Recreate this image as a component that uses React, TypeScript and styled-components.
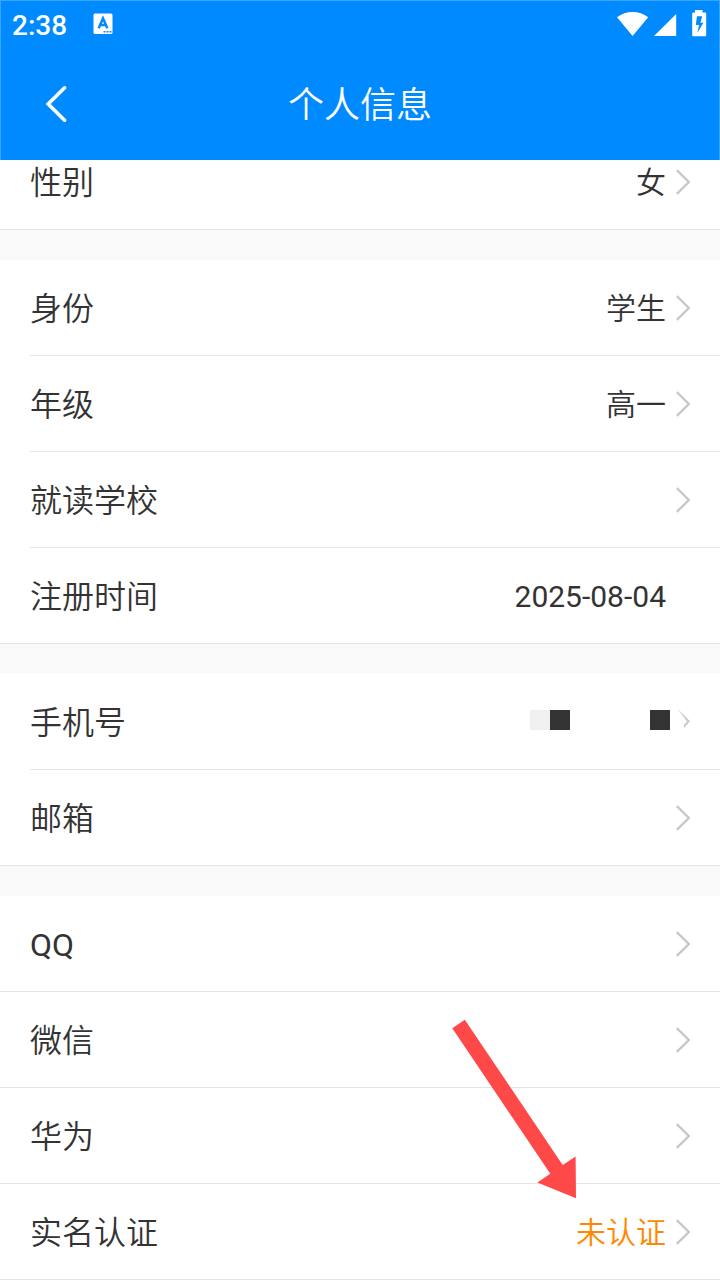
import React from "react";
import styled, { createGlobalStyle } from "styled-components";

const GlobalStyle = createGlobalStyle`
  * { box-sizing: border-box; }
  body {
    margin: 0;
    background: #fff;
    font-family: Roboto, "Noto Sans CJK SC", sans-serif;
    color: #333;
  }
`;

const Screen = styled.div`
  position: relative;
  display: flex;
  flex-direction: column;
  width: 720px;
  height: 1280px;
  overflow: hidden;
`;

const Header = styled.header`
  flex: none;
  height: 160px;
  background: #008aff;
  color: #fff;
  border: 1px solid #3aa4ff;
  border-bottom: 0;
`;

const StatusBar = styled.div`
  display: flex;
  align-items: center;
  justify-content: space-between;
  height: 45px;
  padding: 0 12px 0 11px;
`;

const StatusGroup = styled.div`
  display: flex;
  align-items: center;
`;

const Clock = styled.span`
  width: 81px;
  font-size: 28px;
  line-height: 34px;
  font-weight: 500;
  padding-top: 4px;
`;

const NavBar = styled.div`
  display: grid;
  grid-template-columns: 110px 1fr 110px;
  align-items: center;
  height: 116px;
`;

const BackButton = styled.button`
  display: flex;
  padding: 0 0 0 41px;
  border: 0;
  background: none;
  color: inherit;
`;

const Title = styled.h1`
  margin: 0;
  padding-top: 4px;
  text-align: center;
  font-size: 36px;
  line-height: 48px;
  font-weight: 350;
`;

const ScrollArea = styled.main`
  flex: 1;
  min-height: 0;
  display: flex;
  flex-direction: column;
  justify-content: flex-end;
  gap: 30px;
  overflow: hidden;
  background: #f9f9f9;
`;

const Section = styled.section`
  flex: none;
  background: #fff;
  border-bottom: 1px solid #e5e5e5;
`;

const Row = styled.div<{ $inset?: boolean }>`
  display: flex;
  align-items: center;
  justify-content: space-between;
  height: 96px;
  margin-left: ${(p) => (p.$inset ? 30 : 0)}px;
  padding: 0 30px 0 ${(p) => (p.$inset ? 0 : 30)}px;
  border-bottom: 1px solid #e5e5e5;
  &:last-child {
    height: 95px;
    border-bottom: 0;
  }
`;

const Label = styled.span<{ $latin?: boolean }>`
  padding-top: 2px;
  font-size: 32px;
  line-height: 44px;
  font-weight: ${(p) => (p.$latin ? 400 : 350)};
`;

const Trailing = styled.div`
  display: flex;
  align-items: center;
  gap: 10px;
`;

const Value = styled.span<{ $warn?: boolean; $latin?: boolean }>`
  padding-top: 2px;
  font-size: 30px;
  line-height: 44px;
  font-weight: ${(p) => (p.$latin ? 400 : 350)};
  color: ${(p) => (p.$warn ? "#ff8800" : "inherit")};
`;

const ArrowSlot = styled.span`
  display: flex;
  width: 14px;
  height: 26px;
`;

const Mask = styled.div`
  display: flex;
  width: 140px;
  margin-right: -4px;
  padding-bottom: 4px;
`;

const Block = styled.span<{ $tone: string; $push?: boolean }>`
  width: 20px;
  height: 20px;
  margin-left: ${(p) => (p.$push ? "auto" : "0")};
  background: ${(p) => p.$tone};
`;

const Pointer = styled.svg`
  position: absolute;
  left: 450px;
  top: 1018px;
`;

const Chevron = () => (
  <svg width="14" height="26" viewBox="0 0 14 26" fill="none" stroke="#c8c8c8" strokeWidth="2.4">
    <path d="M.8 1.2 12.8 13 .8 24.8" />
  </svg>
);

type Item = { label: string; value?: string; arrow?: boolean; warn?: boolean; masked?: boolean };

const isLatin = (text: string) => /^[\x20-\x7e]+$/.test(text);

const sections: { inset?: boolean; items: Item[] }[] = [
  { items: [{ label: "性别", value: "女" }] },
  {
    inset: true,
    items: [
      { label: "身份", value: "学生" },
      { label: "年级", value: "高一" },
      { label: "就读学校" },
      { label: "注册时间", value: "2025-08-04", arrow: false },
    ],
  },
  { inset: true, items: [{ label: "手机号", masked: true }, { label: "邮箱" }] },
  {
    items: [
      { label: "QQ" },
      { label: "微信" },
      { label: "华为" },
      { label: "实名认证", value: "未认证", warn: true },
    ],
  },
];

const MaskedPhone = () => (
  <Trailing>
    <Mask>
      <Block $tone="#f0f0f0" />
      <Block $tone="#333" />
      <Block $tone="#333" $push />
    </Mask>
    <ArrowSlot>
      <svg width="14" height="26" viewBox="0 0 14 26" fill="#c8c8c8">
        <path d="M1-.8 14 12.2 8 18.9V16L11 12.4 6.5 6.2Z" />
      </svg>
    </ArrowSlot>
  </Trailing>
);

export default function App() {
  return (
    <>
      <GlobalStyle />
      <Screen>
        <Header>
          <StatusBar>
            <StatusGroup>
              <Clock>2:38</Clock>
              <svg width="20" height="22" viewBox="0 0 20 22">
                <rect x=".5" y=".5" width="19" height="20.5" rx="1.5" fill="#fff" />
                <path d="M5.7 15.2 10 5.3l4.3 9.9M7.2 12.1h5.6" fill="none" stroke="#008aff" strokeWidth="2.5" />
                <path d="M10.5 18.7h2m1 0h2m1 0h2" stroke="#008aff" strokeWidth="1.6" />
              </svg>
            </StatusGroup>
            <StatusGroup>
              <svg width="90" height="28" viewBox="0 0 90 28" fill="#fff">
                <path d="M0 7.2C9 .1 22.2.1 31.2 7.2L15.6 26Z" />
                <path d="M37 26 59.2 4V26Z" />
                <path
                  fillRule="evenodd"
                  d="M78 0h7.5v2.6H88q1.2 0 1.2 1.2V25q0 1.2-1.2 1.2H76.4q-1.2 0-1.2-1.2V3.8q0-1.2 1.2-1.2H78ZM80 6.3 78.8 15h3.3L80.3 23l6.1-10.2H83.4l1.8-6.5Z"
                />
              </svg>
            </StatusGroup>
          </StatusBar>
          <NavBar>
            <BackButton aria-label="返回">
              <svg width="28" height="40" viewBox="0 0 28 40" fill="none" stroke="#fff" strokeWidth="3.6" strokeLinecap="round">
                <path d="M22.6 3.8 6.2 20 22.6 36.2" />
              </svg>
            </BackButton>
            <Title>个人信息</Title>
          </NavBar>
        </Header>
        <ScrollArea>
          {sections.map((section, i) => (
            <Section key={i}>
              {section.items.map((item) => (
                <Row key={item.label} $inset={section.inset}>
                  <Label $latin={isLatin(item.label)}>{item.label}</Label>
                  {item.masked ? (
                    <MaskedPhone />
                  ) : (
                    <Trailing>
                      {item.value && (
                        <Value $warn={item.warn} $latin={isLatin(item.value)}>
                          {item.value}
                        </Value>
                      )}
                      <ArrowSlot>{item.arrow !== false && <Chevron />}</ArrowSlot>
                    </Trailing>
                  )}
                </Row>
              ))}
            </Section>
          ))}
        </ScrollArea>
        <Pointer width="130" height="184" viewBox="450 1018 130 184" fill="#ff4848">
          <path d="M452.3 1028.3 464.8 1019.7 562.7 1165 575.6 1156.5 576 1198.3 537.4 1182.5 550.3 1173.7Z" />
        </Pointer>
      </Screen>
    </>
  );
}
